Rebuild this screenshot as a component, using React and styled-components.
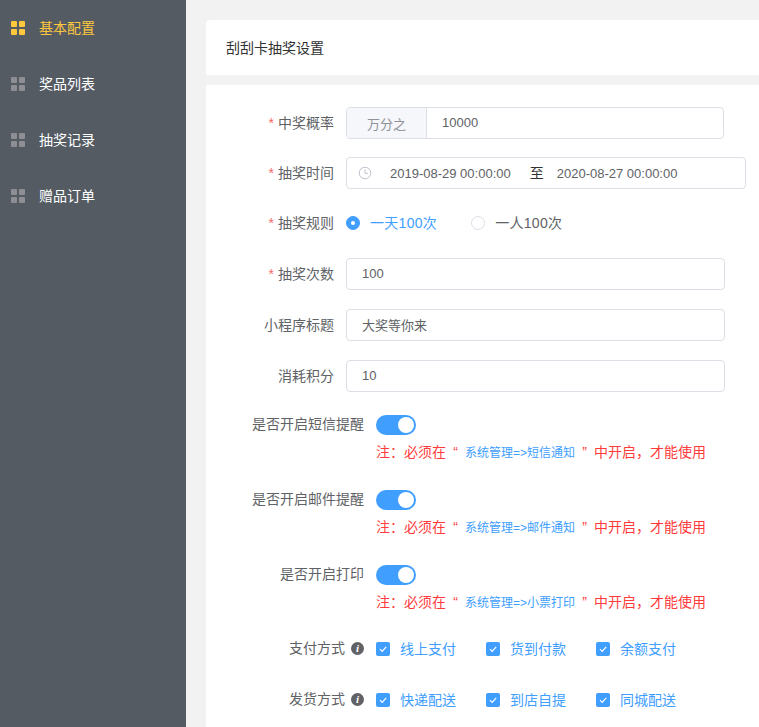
import React from "react";
import styled, { createGlobalStyle } from "styled-components";

const Global = createGlobalStyle`
  html, body { margin: 0; padding: 0; height: 100%; overflow: hidden; }
  body { font-family: "Liberation Sans", "Noto Sans CJK SC", sans-serif; color: #606266; background: #f2f2f2; }
  #root { height: 100%; }
  * { box-sizing: border-box; }
`;

const Page = styled.div`display: flex; width: 759px; height: 727px; overflow: hidden;`;
const Sidebar = styled.nav`width: 186px; flex: none; background: #545b63;`;
const NavItem = styled.div`
  display: flex; align-items: center; height: 56px; padding-left: 11px; gap: 14px;
  font-size: 14px; color: ${p => (p.$active ? "#ffc83d" : "#fff")};
`;
const NavText = styled.span`margin-bottom: 2px;`;
const GridIcon = styled.span`
  display: grid; grid-template-columns: 6px 6px; grid-auto-rows: 6px; gap: 2px;
  & > i { display: block; border-radius: 1px; background: ${p => (p.$active ? "#ffc83d" : "#8d8f94")}; }
`;
const Main = styled.main`flex: 1; min-width: 0; padding: 20px 0 0 20px; display: flex; flex-direction: column; gap: 10px;`;
const Header = styled.header`
  height: 55px; flex: none; background: #fff; border-radius: 4px 0 0 0; padding: 0 0 2px 20px;
  display: flex; align-items: center; font-size: 14px; color: #303133;
`;
const Form = styled.section`flex: 1; background: #fff; padding-top: 22px;`;
const Row = styled.div`
  display: flex; align-items: ${p => (p.$top ? "flex-start" : "center")};
  min-height: 32px; margin-bottom: ${p => p.$mb ?? 19}px; gap: 12px;
`;
const Label = styled.label`
  width: ${p => p.$w || 128}px; flex: none; text-align: right; font-size: 14px; color: #606266;
  line-height: ${p => (p.$tight ? 18 : 20)}px;
  margin-bottom: ${p => (p.$lift ? 2 : 0)}px;
  display: flex; justify-content: flex-end; align-items: center;
`;
const Star = styled.span`color: #f56c6c; margin-right: 4px;`;
const Field = styled.div`
  width: ${p => p.$w || 379}px; height: 32px; border: 1px solid #dcdfe6; border-radius: 4px; background: #fff;
  display: flex; align-items: center; font-size: 13px; color: #606266;
`;
const Value = styled.span`padding-left: 15px; margin-bottom: 2px;`;
const Prepend = styled.span`
  width: 80px; height: 100%; flex: none; display: flex; align-items: center; justify-content: center;
  background: #f5f7fa; border-right: 1px solid #dcdfe6; border-radius: 3px 0 0 3px; color: #909399; font-size: 13px;
`;
const ClockWrap = styled.svg`width: 14px; height: 14px; margin-left: 11px; flex: none; color: #c0c4cc;`;
const DateText = styled.span`margin-left: ${p => p.$ml}px;`;
const To = styled.span`margin-left: 19px; color: #303133; font-size: 14px; margin-bottom: 2px;`;
const Options = styled.div`display: flex; align-items: center;`;
const Radio = styled.span`
  display: inline-flex; align-items: center; gap: 10px; font-size: 14px; margin-right: 34px; letter-spacing: .3px;
  color: ${p => (p.$on ? "#409eff" : "#606266")};
`;
const RadioText = styled.span`margin-bottom: 2px;`;
const RadioDot = styled.i`
  width: 14px; height: 14px; border-radius: 50%; display: flex; align-items: center; justify-content: center;
  background: ${p => (p.$on ? "#409eff" : "#fff")}; border: 1px solid ${p => (p.$on ? "#409eff" : "#dcdfe6")};
  &::after { content: ""; width: 4px; height: 4px; border-radius: 50%; background: #fff; display: ${p => (p.$on ? "block" : "none")}; }
`;
const Switch = styled.span`
  width: 40px; height: 20px; border-radius: 10px; background: #409eff; display: flex; justify-content: flex-end; align-items: center; padding-right: 2px;
  &::after { content: ""; width: 16px; height: 16px; border-radius: 50%; background: #fff; }
`;
const Stack = styled.div`display: flex; flex-direction: column;`;
const Note = styled.div`
  margin-top: 7px; font-size: 14px; line-height: 20px; color: #ff3b3b; white-space: nowrap; display: flex; align-items: baseline;
`;
const Quote = styled.span`width: ${p => p.$w}px; text-align: center;`;
const NoteLink = styled.a`color: #409eff; font-size: 12px;`;
const Check = styled.span`
  width: ${p => p.$w}px; display: inline-flex; align-items: center; gap: 10px; font-size: 14px; color: #409eff;
`;
const CheckText = styled.span`margin-bottom: 2px;`;
const CheckBox = styled.i`
  width: 14px; height: 14px; background: #409eff; border-radius: 2px; display: flex; align-items: center; justify-content: center; flex: none;
`;
const InfoDot = styled.i`
  width: 13px; height: 13px; border-radius: 50%; background: #606266; color: #fff; margin-left: 6px; flex: none;
  display: inline-flex; align-items: center; justify-content: center;
  font: italic bold 11px/13px "Liberation Serif", serif;
`;

const NoteLine = ({ path }) => (
  <Note>
    注：必须在<Quote $w={19}>“</Quote><NoteLink>{path}</NoteLink><Quote $w={19}>”</Quote>中开启，才能使用
  </Note>
);

const Tick = () => (
  <svg width="10" height="10" viewBox="0 0 10 10" fill="none" stroke="#fff" strokeWidth="1.2">
    <path d="M2 5.2 L4.2 7.4 L8.2 2.8" />
  </svg>
);

const CheckItem = ({ w, children }) => (
  <Check $w={w}><CheckBox><Tick /></CheckBox><CheckText>{children}</CheckText></Check>
);

const nav = ["基本配置", "奖品列表", "抽奖记录", "赠品订单"];

export default function App() {
  return (
    <Page>
      <Global />
      <Sidebar>
        {nav.map((n, i) => (
          <NavItem key={n} $active={i === 0}>
            <GridIcon $active={i === 0}><i /><i /><i /><i /></GridIcon>
            <NavText>{n}</NavText>
          </NavItem>
        ))}
      </Sidebar>
      <Main>
        <Header>刮刮卡抽奖设置</Header>
        <Form>
          <Row $mb={18}>
            <Label><Star>*</Star>中奖概率</Label>
            <Field $w={378}><Prepend>万分之</Prepend><Value>10000</Value></Field>
          </Row>
          <Row $mb={18}>
            <Label><Star>*</Star>抽奖时间</Label>
            <Field $w={400}>
              <ClockWrap viewBox="0 0 14 14" fill="none" stroke="currentColor" strokeWidth="1">
                <circle cx="7" cy="7" r="5.8" /><path d="M7 3.5V7.3H10" />
              </ClockWrap>
              <DateText $ml={18}>2019-08-29 00:00:00</DateText>
              <To>至</To>
              <DateText $ml={13}>2020-08-27 00:00:00</DateText>
            </Field>
          </Row>
          <Row>
            <Label><Star>*</Star>抽奖规则</Label>
            <Options>
              <Radio $on><RadioDot $on /><RadioText>一天100次</RadioText></Radio>
              <Radio><RadioDot /><RadioText>一人100次</RadioText></Radio>
            </Options>
          </Row>
          <Row>
            <Label><Star>*</Star>抽奖次数</Label>
            <Field><Value>100</Value></Field>
          </Row>
          <Row>
            <Label>小程序标题</Label>
            <Field><Value>大奖等你来</Value></Field>
          </Row>
          <Row $mb={23}>
            <Label>消耗积分</Label>
            <Field><Value>10</Value></Field>
          </Row>
          <Row $top $mb={27}>
            <Label $w={158} $tight>是否开启短信提醒</Label>
            <Stack><Switch /><NoteLine path="系统管理=>短信通知" /></Stack>
          </Row>
          <Row $top $mb={27}>
            <Label $w={158} $tight>是否开启邮件提醒</Label>
            <Stack><Switch /><NoteLine path="系统管理=>邮件通知" /></Stack>
          </Row>
          <Row $top $mb={20}>
            <Label $w={158} $tight>是否开启打印</Label>
            <Stack><Switch /><NoteLine path="系统管理=>小票打印" /></Stack>
          </Row>
          <Row>
            <Label $w={158} $lift>支付方式<InfoDot>i</InfoDot></Label>
            <Options>
              <CheckItem w={110}>线上支付</CheckItem>
              <CheckItem w={110}>货到付款</CheckItem>
              <CheckItem w={80}>余额支付</CheckItem>
            </Options>
          </Row>
          <Row>
            <Label $w={158} $lift>发货方式<InfoDot>i</InfoDot></Label>
            <Options>
              <CheckItem w={110}>快递配送</CheckItem>
              <CheckItem w={110}>到店自提</CheckItem>
              <CheckItem w={80}>同城配送</CheckItem>
            </Options>
          </Row>
        </Form>
      </Main>
    </Page>
  );
}
